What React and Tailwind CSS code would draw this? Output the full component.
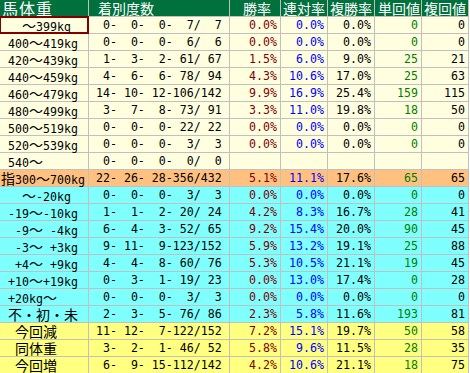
import React from "react";

const rows = [
  { label: "   ～399kg", d: [0, 0, 0, 7, 7], r: ["0.0%", "0.0%", "0.0%", "0", "0"], bg: "cream", selected: true },
  { label: " 400～419kg", d: [0, 0, 0, 6, 6], r: ["0.0%", "0.0%", "0.0%", "0", "0"], bg: "cream" },
  { label: " 420～439kg", d: [1, 3, 2, 61, 67], r: ["1.5%", "6.0%", "9.0%", "25", "21"], bg: "cream" },
  { label: " 440～459kg", d: [4, 6, 6, 78, 94], r: ["4.3%", "10.6%", "17.0%", "25", "63"], bg: "cream" },
  { label: " 460～479kg", d: [14, 10, 12, 106, 142], r: ["9.9%", "16.9%", "25.4%", "159", "115"], bg: "cream" },
  { label: " 480～499kg", d: [3, 7, 8, 73, 91], r: ["3.3%", "11.0%", "19.8%", "18", "50"], bg: "cream" },
  { label: " 500～519kg", d: [0, 0, 0, 22, 22], r: ["0.0%", "0.0%", "0.0%", "0", "0"], bg: "cream" },
  { label: " 520～539kg", d: [0, 0, 0, 3, 3], r: ["0.0%", "0.0%", "0.0%", "0", "0"], bg: "cream" },
  { label: " 540～", d: [0, 0, 0, 0, 0], r: ["", "", "", "", ""], bg: "cream" },
  { label: "指300～700kg", d: [22, 26, 28, 356, 432], r: ["5.1%", "11.1%", "17.6%", "65", "65"], bg: "orange" },
  { label: "   ～-20kg", d: [0, 0, 0, 3, 3], r: ["0.0%", "0.0%", "0.0%", "0", "0"], bg: "cyan" },
  { label: " -19～-10kg", d: [1, 1, 2, 20, 24], r: ["4.2%", "8.3%", "16.7%", "28", "41"], bg: "cyan" },
  { label: "  -9～ -4kg", d: [6, 4, 3, 52, 65], r: ["9.2%", "15.4%", "20.0%", "90", "45"], bg: "cyan" },
  { label: "  -3～ +3kg", d: [9, 11, 9, 123, 152], r: ["5.9%", "13.2%", "19.1%", "25", "88"], bg: "cyan" },
  { label: "  +4～ +9kg", d: [4, 4, 8, 60, 76], r: ["5.3%", "10.5%", "21.1%", "19", "45"], bg: "cyan" },
  { label: " +10～+19kg", d: [0, 3, 1, 19, 23], r: ["0.0%", "13.0%", "17.4%", "0", "28"], bg: "cyan" },
  { label: " +20kg～", d: [0, 0, 0, 3, 3], r: ["0.0%", "0.0%", "0.0%", "0", "0"], bg: "cyan" },
  { label: " 不・初・未", d: [2, 3, 5, 76, 86], r: ["2.3%", "5.8%", "11.6%", "193", "81"], bg: "cyan" },
  { label: "  今回減", d: [11, 12, 7, 122, 152], r: ["7.2%", "15.1%", "19.7%", "50", "58"], bg: "yellow" },
  { label: "  同体重", d: [3, 2, 1, 46, 52], r: ["5.8%", "9.6%", "11.5%", "28", "35"], bg: "yellow" },
  { label: "  今回増", d: [6, 9, 15, 112, 142], r: ["4.2%", "10.6%", "21.1%", "18", "75"], bg: "yellow" },
];

const bgClass = {
  cream: "bg-[#ffffe0]",
  orange: "bg-[#ffc080]",
  cyan: "bg-[#80ffff]",
  yellow: "bg-[#ffff80]",
};

const valueColors = [
  "text-[#800000]",
  "text-[#0000ff]",
  "text-black",
  "text-[#008000]",
  "text-black",
];

const pad3 = (n) => String(n).padStart(3, " ");

function formatCounts(d) {
  return `${pad3(d[0])}-${pad3(d[1])}-${pad3(d[2])}-${pad3(d[3])}/${pad3(d[4])}`;
}

// wide glyphs get the CJK font at full size, half-width ones stay mono
function Label({ text }) {
  return text.split("").map((ch, i) =>
    ch.charCodeAt(0) > 0x2000 ? (
      <span key={i} className="text-[14px] leading-[16px] font-['Noto_Sans_CJK_JP',sans-serif]">
        {ch}
      </span>
    ) : (
      <span key={i}>{ch}</span>
    ),
  );
}

const headers = ["馬体重", "着別度数", "勝率", "連対率", "複勝率", "単回値", "複回値"];
const headerPad = [
  "pl-[2px] text-[16px] tracking-[1px]",
  "pl-[9px] text-[14px]",
  "pl-[13px] text-[14px]",
  "pl-[2px] text-[14px]",
  "pl-[2px] text-[14px]",
  "pl-[3px] text-[14px]",
  "pl-[2px] text-[14px]",
];

export default function App() {
  return (
    <div className="w-[470px] h-[373px] overflow-hidden bg-white">
      <div className="grid w-[469px] grid-cols-[88px_140px_50px_46px_46px_46px_46px] auto-rows-[16px] gap-px bg-[#c0c0c0] pr-px font-['DejaVu_Sans_Mono','Noto_Sans_CJK_JP',monospace] text-[11.6px] leading-[16px]">
        {headers.map((h, i) => (
          <div
            key={h}
            className={`bg-[#00703c] text-white leading-[16px] font-['Noto_Sans_CJK_JP',sans-serif] whitespace-nowrap overflow-hidden ${headerPad[i]}`}
          >
            {h}
          </div>
        ))}
        {rows.map((row) => (
          <React.Fragment key={row.label}>
            <div
              className={`relative whitespace-pre overflow-visible pl-px text-black ${bgClass[row.bg]} ${
                row.selected ? "outline outline-1 outline-[#800000] shadow-[inset_0_0_0_1px_#800000]" : ""
              }`}
            >
              <Label text={row.label} />
            </div>
            <div className={`whitespace-pre text-black ${bgClass[row.bg]}`}>
              {formatCounts(row.d)}
            </div>
            {row.r.map((v, i) => (
              <div
                key={i}
                className={`whitespace-pre text-right pr-[3px] ${valueColors[i]} ${bgClass[row.bg]}`}
              >
                {v}
              </div>
            ))}
          </React.Fragment>
        ))}
      </div>
    </div>
  );
}
